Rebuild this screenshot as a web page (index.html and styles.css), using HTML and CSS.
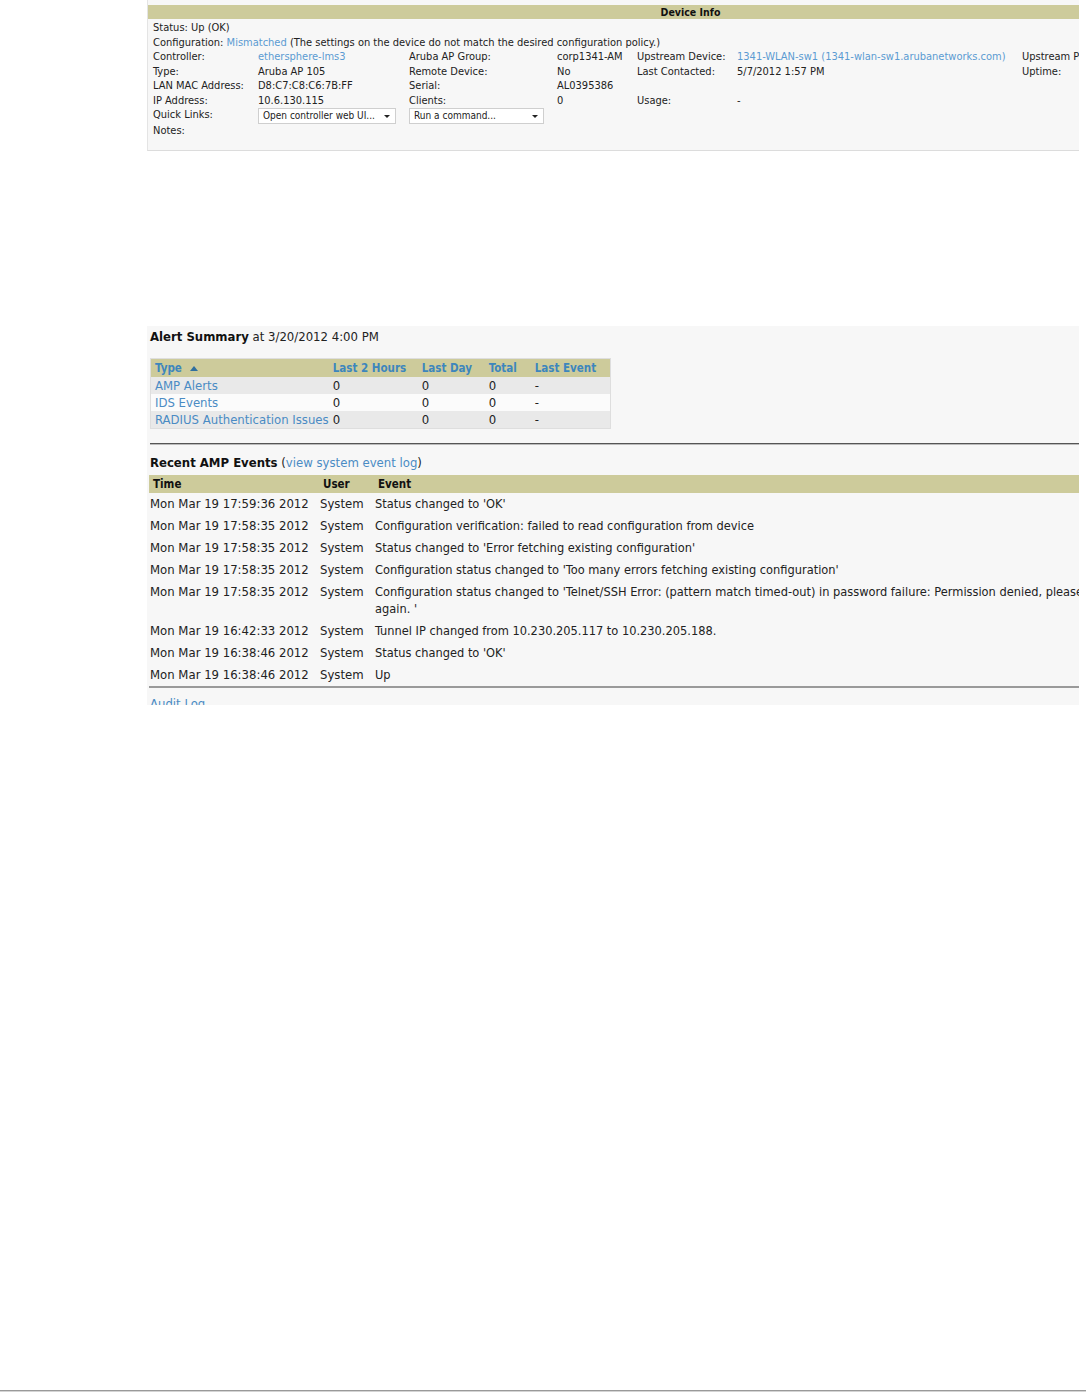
FILE: index.html
```html
<!DOCTYPE html>
<html lang="en">
<head>
    <meta charset="UTF-8">
    <title>AP Monitoring</title>
    <link rel="stylesheet" href="styles.css">
</head>
<body>
    <div class="page">
        <!-- Device Info -->
        <div class="clip device-clip">
            <div class="panel device-info">
                <div class="panel-title">Device Info</div>
                <div class="info-grid">
                    <div class="full">Status: Up (OK)</div>
                    <div class="full">Configuration: <a href="#">Mismatched</a> (The settings on the device do not match the desired configuration policy.)</div>

                    <div>Controller:</div>
                    <div><a href="#">ethersphere-lms3</a></div>
                    <div>Aruba AP Group:</div>
                    <div>corp1341-AM</div>
                    <div>Upstream Device:</div>
                    <div><a href="#">1341-WLAN-sw1 (1341-wlan-sw1.arubanetworks.com)</a></div>
                    <div>Upstream Port:</div>

                    <div>Type:</div>
                    <div>Aruba AP 105</div>
                    <div>Remote Device:</div>
                    <div>No</div>
                    <div>Last Contacted:</div>
                    <div>5/7/2012 1:57 PM</div>
                    <div>Uptime:</div>

                    <div>LAN MAC Address:</div>
                    <div>D8:C7:C8:C6:7B:FF</div>
                    <div>Serial:</div>
                    <div>AL0395386</div>
                    <div></div>
                    <div></div>
                    <div></div>

                    <div>IP Address:</div>
                    <div>10.6.130.115</div>
                    <div>Clients:</div>
                    <div>0</div>
                    <div>Usage:</div>
                    <div>-</div>
                    <div></div>

                    <div class="ql">Quick Links:</div>
                    <div class="ql"><div class="fake-select sel-wide">Open controller web UI...</div></div>
                    <div class="ql span-sel"><div class="fake-select">Run a command...</div></div>

                    <div class="full">Notes:</div>
                </div>
            </div>
        </div>

        <!-- Alerts and events -->
        <div class="clip summary-clip">
            <div class="panel summary">
                <h3><b>Alert Summary</b> at 3/20/2012 4:00 PM</h3>
                <table class="alerts">
                    <thead>
                        <tr>
                            <th class="c-type">Type <span class="sort-up"></span></th>
                            <th class="c-2h">Last 2 Hours</th>
                            <th class="c-day">Last Day</th>
                            <th class="c-total">Total</th>
                            <th>Last Event</th>
                        </tr>
                    </thead>
                    <tbody>
                        <tr><td><a href="#">AMP Alerts</a></td><td>0</td><td>0</td><td>0</td><td>-</td></tr>
                        <tr><td><a href="#">IDS Events</a></td><td>0</td><td>0</td><td>0</td><td>-</td></tr>
                        <tr><td><a href="#">RADIUS Authentication Issues</a></td><td>0</td><td>0</td><td>0</td><td>-</td></tr>
                    </tbody>
                </table>

                <div class="rule"></div>

                <h3 class="events-title"><b>Recent AMP Events</b> (<a href="#">view system event log</a>)</h3>
                <table class="events">
                    <thead>
                        <tr><th class="c-time">Time</th><th class="c-user">User</th><th>Event</th></tr>
                    </thead>
                    <tbody>
                        <tr><td>Mon Mar 19 17:59:36 2012</td><td>System</td><td>Status changed to 'OK'</td></tr>
                        <tr><td>Mon Mar 19 17:58:35 2012</td><td>System</td><td>Configuration verification: failed to read configuration from device</td></tr>
                        <tr><td>Mon Mar 19 17:58:35 2012</td><td>System</td><td>Status changed to 'Error fetching existing configuration'</td></tr>
                        <tr><td>Mon Mar 19 17:58:35 2012</td><td>System</td><td>Configuration status changed to 'Too many errors fetching existing configuration'</td></tr>
                        <tr><td>Mon Mar 19 17:58:35 2012</td><td>System</td><td>Configuration status changed to 'Telnet/SSH Error: (pattern match timed-out) in password failure: Permission denied, please try<br>again. '</td></tr>
                        <tr><td>Mon Mar 19 16:42:33 2012</td><td>System</td><td>Tunnel IP changed from 10.230.205.117 to 10.230.205.188.</td></tr>
                        <tr><td>Mon Mar 19 16:38:46 2012</td><td>System</td><td>Status changed to 'OK'</td></tr>
                        <tr><td>Mon Mar 19 16:38:46 2012</td><td>System</td><td>Up</td></tr>
                    </tbody>
                </table>

                <a href="#" class="audit-link">Audit Log</a>
            </div>
        </div>

        <div class="footer-rule"></div>
    </div>
</body>
</html>
```

FILE: styles.css
```css
* {
    margin: 0;
    padding: 0;
    box-sizing: border-box;
}

html, body {
    height: 100%;
}

body {
    font-family: "DejaVu Sans Condensed", "DejaVu Sans", sans-serif;
    color: #222;
    background: #fff;
}

a {
    color: #4a8bc4;
    text-decoration: none;
}

.page {
    min-height: 100vh;
    display: flex;
    flex-direction: column;
}

/* clipping windows */
.clip {
    margin-left: 147px;
    width: 932px;
    overflow: hidden;
}

.panel {
    background: #f7f7f7;
}

/* Device Info */
.device-info {
    width: 1086px;
    padding-top: 5px;
    padding-bottom: 11px;
    border-left: 1px solid #e4e4e4;
    border-bottom: 1px solid #dcdcdc;
    font-size: 11px;
}

.panel-title {
    background: #cdcb9b;
    height: 14px;
    line-height: 14px;
    text-align: center;
    font-weight: bold;
    font-size: 10.5px;
    color: #111;
}

.info-grid {
    display: grid;
    grid-template-columns: 105px 151px 148px 80px 100px 285px 1fr;
    grid-template-rows: repeat(6, 14.5px) 16px 14.5px;
    padding: 2px 0 0 5px;
    line-height: 14.5px;
    white-space: nowrap;
}

.info-grid .full {
    grid-column: 1 / -1;
}

.info-grid a {
    color: #5b9bd2;
}

.info-grid .span-sel {
    grid-column: 3 / -1;
}

.fake-select {
    position: relative;
    width: 135px;
    height: 16px;
    padding-left: 4px;
    line-height: 14px;
    background: #fff;
    border: 1px solid #cfcfcf;
    font-size: 10px;
}

.fake-select.sel-wide {
    width: 138px;
}

.fake-select::after {
    content: "";
    position: absolute;
    right: 5px;
    top: 6px;
    border-left: 3px solid transparent;
    border-right: 3px solid transparent;
    border-top: 3px solid #222;
}

/* Summary panel */
.summary-clip {
    margin-top: 175px;
    height: 379px;
}

.summary {
    height: 100%;
    padding: 3px 0 0 3px;
    font-size: 13px;
}

.summary h3 {
    font-size: 13px;
    font-weight: normal;
    line-height: 16px;
}

.summary h3 b {
    color: #111;
}

/* Alert table */
.alerts {
    margin-top: 13px;
    border-collapse: collapse;
    border: 1px solid #dedede;
    width: 461px;
    font-size: 13px;
}

.alerts th {
    background: #cdcb9b;
    color: #3d86bd;
    text-align: left;
    height: 19px;
    padding: 0 0 0 4px;
    font-size: 11.5px;
    font-weight: bold;
    white-space: nowrap;
}

.alerts td {
    height: 17px;
    padding: 0 0 0 4px;
    line-height: 15px;
    white-space: nowrap;
}

.alerts tbody tr:nth-child(odd) {
    background: #e9e9e9;
}

.alerts tbody tr:nth-child(even) {
    background: #fbfbfb;
}

.alerts .c-type { width: 178px; }
.alerts .c-2h { width: 89px; }
.alerts .c-day { width: 67px; }
.alerts .c-total { width: 46px; }

.sort-up {
    display: inline-block;
    margin-left: 5px;
    vertical-align: 1px;
    border-left: 4px solid transparent;
    border-right: 4px solid transparent;
    border-bottom: 5px solid #2f6f9f;
}

.rule {
    margin-top: 14px;
    border-top: 1px solid #555;
    border-bottom: 1px solid #bbb;
}

.events-title {
    margin-top: 10px;
    margin-bottom: 4px;
}

/* Events table */
.events {
    width: 1140px;
    margin-left: -1px;
    border-collapse: collapse;
    font-size: 13px;
}

.events th {
    background: #cdcb9b;
    text-align: left;
    height: 18px;
    padding: 0 4px;
    font-size: 11.5px;
    font-weight: bold;
    color: #111;
}

.events td {
    padding: 2px 1px 3px;
    line-height: 17px;
    vertical-align: top;
    white-space: nowrap;
}

.events td:last-child {
    font-size: 12.7px;
}

.events .c-time { width: 170px; }
.events .c-user { width: 55px; }

.events tbody tr:last-child td {
    border-bottom: 2px solid #9a9a9a;
}

.audit-link {
    display: block;
    margin-top: 8px;
    font-size: 13px;
    line-height: 15px;
}

/* bottom of the page */
.footer-rule {
    margin-top: auto;
    height: 2px;
    border-top: 1px solid #9a9a9a;
    background: #d4d4d4;
}
```
